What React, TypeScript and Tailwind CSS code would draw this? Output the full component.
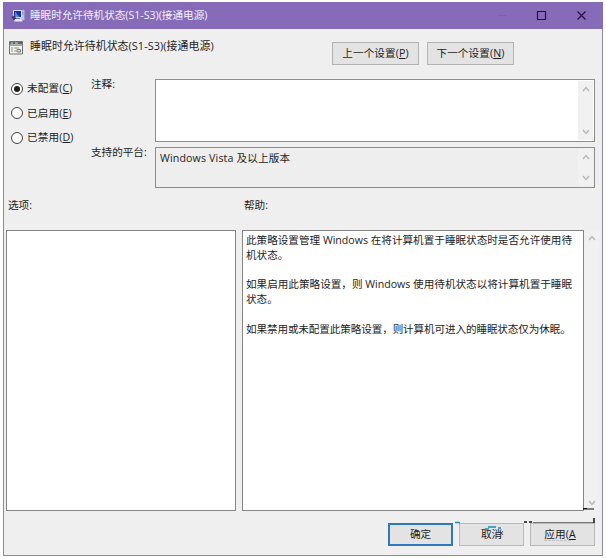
import { useState } from "react";

const ScrollArrow = ({ down = false }: { down?: boolean }) => (
  <svg
    width="8"
    height="6"
    viewBox="0 0 8 6"
    fill="none"
    stroke="#b8b8b8"
    strokeWidth="1.5"
    className={down ? "rotate-180" : ""}
  >
    <path d="M1 5 L4 1.6 L7 5" />
  </svg>
);

const ScrollBar = () => (
  <div className="flex w-[15px] shrink-0 flex-col items-center justify-between bg-[#f1f1f1] py-[5px]">
    <ScrollArrow />
    <ScrollArrow down />
  </div>
);

const ComputerIcon = () => (
  <svg width="15" height="14" viewBox="0 0 15 14" className="shrink-0">
    <path d="M9 1h4.5v10H9z" fill="#b9c3dc" />
    <path d="M10 3h2.5M10 5h2.5" stroke="#7c86ad" />
    <path d="M2.5 1.5h8v7h-8z" fill="#1b2f9c" stroke="#d3dcf4" />
    <path d="M4 2.5 L8.5 8 H4z" fill="#4f8be0" />
    <path d="M0.5 8l3-1.5 2 3.5-2.5 1.5z" fill="#3a3a70" />
    <path d="M4 10h6l2 2.5H3z" fill="#e4e8f4" />
  </svg>
);

const PolicyIcon = () => (
  <svg width="14" height="15" viewBox="0 0 14 15" className="shrink-0">
    <path d="M0.5 1.5h13v12.5h-13z" fill="#f5f5f0" stroke="#6d716d" />
    <path d="M1 2h12v2.5H1z" fill="#5d6969" />
    <path d="M2 3h2M6 3h3" stroke="#d7dfd9" />
    <path d="M0.5 5.5h13" stroke="#99a29d" />
    <path d="M3 7v5M5 8h5M5 11h2" stroke="#8b918c" />
    <path d="M8 9.5h3.5V12H8z" fill="#d9d9cc" stroke="#777b77" />
  </svg>
);

const Key = ({ k }: { k: string }) => (
  <span>
    (<span className="underline underline-offset-1">{k}</span>)
  </span>
);

const options = [
  { label: "未配置", k: "C" },
  { label: "已启用", k: "E" },
  { label: "已禁用", k: "D" },
];

const App = () => {
  const [selected, setSelected] = useState("C");

  return (
    <div className="h-[559px] w-[606px] bg-white pt-[2px] pl-[3px] font-['Open_Sans','Noto_Sans_CJK_SC',sans-serif] text-[10.6px] leading-[15px] whitespace-nowrap text-[#1c1c1c]">
      <div className="flex h-[554px] w-[600px] flex-col border border-[#8e86a8] bg-[#efefef]">
        <div className="-mx-px -mt-px flex h-[27px] shrink-0 items-center bg-[#866bb8] pl-2 text-[#f4f0fa]">
          <ComputerIcon />
          <span className="ml-[4px]">睡眠时允许待机状态(S1-S3)(接通电源)</span>
          <div className="ml-auto flex items-center pr-[15px]">
            <svg width="90" height="11" viewBox="0 0 90 11" fill="none" stroke="#25133f">
              <path d="M1 5.5h7" stroke="#7a60aa" />
              <path d="M39.5 1.5h8v8h-8z" strokeWidth="1.2" />
              <path d="M79.5 1.5l8 8M87.5 1.5l-8 8" strokeWidth="1.2" />
            </svg>
          </div>
        </div>

        <div className="flex h-[50px] shrink-0 pl-[5px]">
          <div className="pt-[11px]">
            <PolicyIcon />
          </div>
          <span className="mt-[9px] ml-[7px] w-[302px] text-[10.9px] tracking-[0.06px]">
            睡眠时允许待机状态(S1-S3)(接通电源)
          </span>
          <div className="mt-[13px] flex h-[23px] gap-2">
            <button className="w-[87px] border border-[#b3b3b3] bg-[#e3e3e3] tracking-[0.1px]">
              上一个设置
              <Key k="P" />
            </button>
            <button className="w-[87px] border border-[#b3b3b3] bg-[#e3e3e3] tracking-[0.1px]">
              下一个设置
              <Key k="N" />
            </button>
          </div>
        </div>

        <div className="flex h-[110px] shrink-0">
          <div className="flex w-[87px] flex-col gap-[9.5px] pt-[2px] pl-[7px]">
            {options.map((o) => (
              <button
                key={o.k}
                className="flex h-[15px] items-center gap-1 text-left tracking-[0.15px]"
                onClick={() => setSelected(o.k)}
              >
                <span className="flex size-3 items-center justify-center rounded-full border border-[#444] bg-white">
                  {selected === o.k && (
                    <span className="size-[6px] rounded-full bg-[#1c1c1c]" />
                  )}
                </span>
                <span>
                  {o.label}
                  <Key k={o.k} />
                </span>
              </button>
            ))}
          </div>
          <div className="flex w-[64px] flex-col gap-[53px]">
            <span className="-mt-[2px]">注释:</span>
            <span>支持的平台:</span>
          </div>
          <div className="flex w-[440px] flex-col gap-[5px]">
            <div className="flex h-[63px] border border-[#8c8c8c] bg-white p-px">
              <div className="grow" />
              <ScrollBar />
            </div>
            <div className="flex h-[41px] border border-[#8c8c8c] bg-[#eee] p-px">
              <div className="grow pt-[2px] pl-[3px] tracking-[0.16px]">
                Windows Vista 及以上版本
              </div>
              <ScrollBar />
            </div>
          </div>
        </div>

        <div className="flex h-[41px] shrink-0 pt-[9px] pl-1">
          <span className="w-[236px]">选项:</span>
          <span>帮助:</span>
        </div>

        <div className="flex h-[281px] shrink-0 pl-[2px]">
          <div className="w-[230px] border border-[#858585] bg-white" />
          <div className="ml-[6px] w-[342px] border border-[#858585] bg-white pt-[2px] pl-[3px] leading-[14.8px]">
            <p>
              此策略设置管理 Windows 在将计算机置于睡眠状态时是否允许使用待
              <br />
              机状态。
            </p>
            <p className="mt-[14.8px]">
              如果启用此策略设置，则 Windows 使用待机状态以将计算机置于睡眠
              <br />
              状态。
            </p>
            <p className="mt-[14.8px] tracking-[-0.12px]">
              如果禁用或未配置此策略设置，则计算机可进入的睡眠状态仅为休眠。
            </p>
          </div>
          <ScrollBar />
        </div>

        <div className="flex gap-[6px] pt-[12px] pl-[384px]">
          <button className="h-[23px] w-[65px] border-2 border-[#2f78bd] bg-[#e3e3e3]">
            确定
          </button>
          <div className="relative">
            <button className="h-[23px] w-[65px] border border-[#b9b9b9] bg-[#e3e3e3]">
              取消
            </button>
            <svg
              width="66"
              height="23"
              fill="none"
              strokeWidth="1.5"
              className="absolute top-0 left-0 overflow-visible"
            >
              <path d="M-4 -0.5h5M29 4h8M26 6h4M39 5h3" stroke="#1791b5" />
              <path d="M41 8l3 4M44 8l-3 4" stroke="#333" strokeWidth="0.8" />
            </svg>
          </div>
          <div className="relative">
            <button className="h-[23px] w-[65px] border border-[#b9b9b9] bg-[#e3e3e3] pr-[5px] tracking-[0.1px]">
              应用(<span className="underline underline-offset-1">A</span>
            </button>
            <svg
              width="84"
              height="42"
              viewBox="-18 -18 84 42"
              fill="none"
              stroke="#111"
              className="absolute -top-[18px] -left-[18px]"
            >
              <path d="M-6 -1h3M-1 -1h3" strokeWidth="1.5" />
              <path d="M3 -0.5h61" stroke="#777" />
              <path d="M64 -5v5" strokeWidth="1.5" />
              <path d="M53 -14h11M53 -14.5h4" strokeWidth="1.2" />
              <path d="M14 17.5h27" stroke="#bbb" strokeWidth="0.8" strokeDasharray="3 1" />
            </svg>
          </div>
        </div>
      </div>
    </div>
  );
};

export default App;
